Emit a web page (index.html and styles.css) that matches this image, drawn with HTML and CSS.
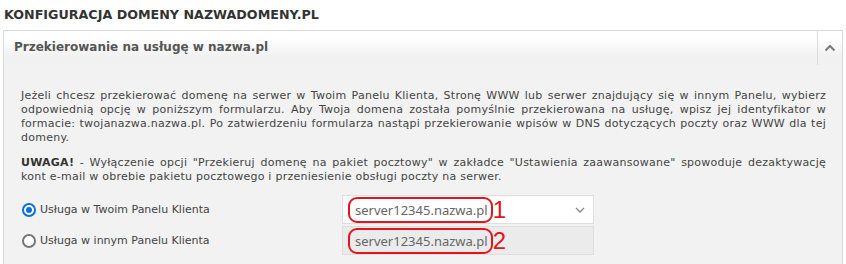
FILE: index.html
```html
<!DOCTYPE html>
<html lang="pl">
<head>
  <meta charset="UTF-8">
  <title>Konfiguracja domeny</title>
  <link rel="stylesheet" href="styles.css">
</head>
<body>
  <h1 class="page-title">KONFIGURACJA DOMENY NAZWADOMENY.PL</h1>

  <div class="panel">
    <div class="panel-head">
      <div class="panel-title">Przekierowanie na usługę w nazwa.pl</div>
      <div class="panel-toggle">
        <svg width="12" height="8" viewBox="0 0 12 8"><path d="M1.5 6.5 L6 2 L10.5 6.5" fill="none" stroke="#7a7a7a" stroke-width="2"/></svg>
      </div>
    </div>

    <div class="panel-body">
      <p>Jeżeli chcesz przekierować domenę na serwer w Twoim Panelu Klienta, Stronę WWW lub serwer znajdujący się w innym Panelu, wybierz odpowiednią opcję w poniższym formularzu. Aby Twoja domena została pomyślnie przekierowana na usługę, wpisz jej identyfikator w formacie: twojanazwa.nazwa.pl. Po zatwierdzeniu formularza nastąpi przekierowanie wpisów w DNS dotyczących poczty oraz WWW dla tej domeny.</p>
      <p><b>UWAGA!</b> - Wyłączenie opcji "Przekieruj domenę na pakiet pocztowy" w zakładce "Ustawienia zaawansowane" spowoduje dezaktywację kont <span class="nowrap">e-mail</span> w obrebie pakietu pocztowego i przeniesienie obsługi poczty na serwer.</p>

      <div class="form-row">
        <label class="option"><span class="radio checked"></span>Usługa w Twoim Panelu Klienta</label>
        <div class="field select">
          <span class="mark">server12345.nazwa.pl</span><span class="num">1</span>
          <svg class="caret" width="10" height="6" viewBox="0 0 10 6"><path d="M1 1 L5 5 L9 1" fill="none" stroke="#8a8a8a" stroke-width="1.3"/></svg>
        </div>
      </div>
      <div class="form-row">
        <label class="option"><span class="radio"></span>Usługa w innym Panelu Klienta</label>
        <div class="field disabled">
          <span class="mark">server12345.nazwa.pl</span><span class="num">2</span>
        </div>
      </div>
    </div>
  </div>
</body>
</html>
```

FILE: styles.css
```css
/* Base */
body {
  margin: 0;
  background-color: #fff;
  font-family: "DejaVu Sans", Verdana, sans-serif;
  color: #444;
}

/* Page heading */
.page-title {
  margin: 0;
  padding: 7px 0 0 4px;
  height: 23px;
  font-size: 12.7px;
  font-weight: bold;
  color: #333;
}

/* Panel */
.panel {
  margin: 0 3px 0 3px;
  border: 1px solid #d9d9d9;
  background-color: #f2f2f2;
}

.panel-head {
  display: flex;
  height: 34px;
  background: linear-gradient(#fff 20%, #f1f1f1 75%);
}

.panel-title {
  flex: 1;
  padding-left: 10px;
  line-height: 33px;
  font-size: 12px;
  font-weight: bold;
  color: #555;
}

.panel-toggle {
  width: 24px;
  border-left: 1px solid #dcdcdc;
  display: flex;
  align-items: center;
  justify-content: center;
}

.panel-body {
  padding: 24px 16px 10px 17px;
  font-size: 11px;
  line-height: 14px;
}

.panel-body p {
  margin: 0 0 11px;
  text-align: justify;
  letter-spacing: 0.25px;
}

.panel-body b {
  color: #333;
}

.nowrap {
  white-space: nowrap;
}

/* Form rows */
.form-row {
  display: grid;
  grid-template-columns: 321px 252px;
  align-items: center;
  margin-bottom: 2px;
}

.form-row:first-of-type {
  margin-top: 10px;
}

.option {
  display: flex;
  align-items: center;
  gap: 4px;
  font-size: 11px;
  color: #444;
  padding-left: 1px;
}

.radio {
  width: 10px;
  height: 10px;
  border: 2px solid #767676;
  border-radius: 50%;
  background-color: #fff;
  position: relative;
}

.radio.checked {
  border-color: #0b6fde;
}

.radio.checked::after {
  content: "";
  position: absolute;
  left: 2px;
  top: 2px;
  width: 6px;
  height: 6px;
  border-radius: 50%;
  background-color: #0b6fde;
}

.field {
  height: 27px;
  border: 1px solid #dedede;
  display: flex;
  align-items: center;
  padding-left: 5px;
  font-family: "Noto Sans", sans-serif;
  font-size: 13px;
  color: #666;
}

.field.select {
  background-color: #fff;
}

.field.disabled {
  background-color: #ebebeb;
}

.mark {
  height: 22px;
  line-height: 22px;
  padding: 0 3px 0 5px;
  border: 2px solid #e3141c;
  border-radius: 9px;
}

.num {
  margin-left: 0;
  font-family: "Liberation Sans", Arial, sans-serif;
  font-size: 24px;
  line-height: 24px;
  color: #e3141c;
}

.caret {
  margin-left: auto;
  margin-right: 8px;
}
```
